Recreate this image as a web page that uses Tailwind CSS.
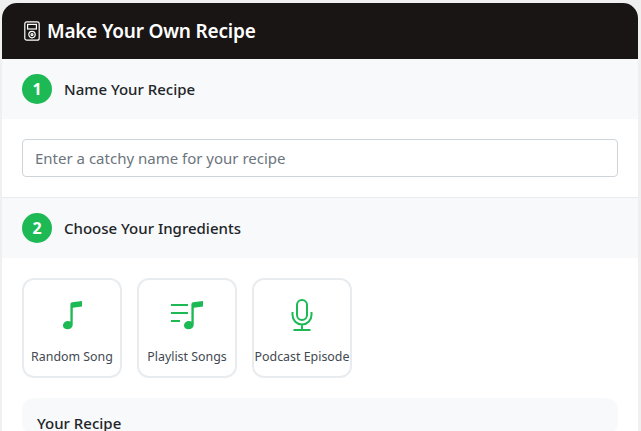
<!DOCTYPE html>
<html lang="en">
<head>
<meta charset="utf-8">
<script src="https://cdn.jsdelivr.net/npm/@tailwindcss/browser@4"></script>
</head>
<body class="h-[431px] overflow-hidden bg-[#f0f0f0] pt-[3px] pl-[2px] pr-[3px] font-['Noto_Sans','Open_Sans',sans-serif]">
<main class="overflow-hidden rounded-t-[15px] bg-white h-[428px]">
  <header class="flex h-[56px] items-center gap-[7px] bg-[#191514] pl-[22px] text-white">
    <svg class="h-[20px] w-[16px]" viewBox="0 0 16 20" fill="none" stroke="currentColor" stroke-width="1.2"><rect x="0.8" y="0.8" width="14.4" height="18.4" rx="2"/><rect x="3.6" y="3.4" width="8.8" height="4.6"/><circle cx="8" cy="13.6" r="3.2"/><circle cx="8" cy="13.6" r="1"/></svg>
    <h1 class="text-[19px] font-semibold leading-none tracking-[-0.2px]">Make Your Own Recipe</h1>
  </header>
  <section>
    <div class="flex h-[60px] items-center gap-[12px] bg-[#f8f9fa] px-[20px]">
      <span class="flex h-[30px] w-[30px] items-center justify-center rounded-full bg-[#1db954] text-[16px] font-bold text-white">1</span>
      <h2 class="text-[15px] font-medium text-[#212529]">Name Your Recipe</h2>
    </div>
    <div class="h-[79px] border-b border-[#e9ecef] px-[20px] pt-[20px]">
      <input class="block h-[38px] w-full rounded-[4px] border border-[#ced4da] px-[12px] text-[15px] text-[#212529] placeholder:text-[#6c757d]" placeholder="Enter a catchy name for your recipe">
    </div>
  </section>
  <section>
    <div class="flex h-[60px] items-center gap-[12px] bg-[#f8f9fa] px-[20px]">
      <span class="flex h-[30px] w-[30px] items-center justify-center rounded-full bg-[#1db954] text-[16px] font-bold text-white">2</span>
      <h2 class="text-[15px] font-medium text-[#212529]">Choose Your Ingredients</h2>
    </div>
    <div class="px-[20px] pt-[20px]">
      <div class="flex gap-[15px]">
        <button class="flex h-[100px] w-[100px] flex-col items-center rounded-[12px] border-2 border-[#e9ecef] bg-white pt-[20px]">
          <svg class="h-[32px] w-[32px]" viewBox="0 0 32 32" fill="#1db954"><path d="M14.4 4Q14.6 2.5 16.2 2.2L26 1V6.6L16.8 7.8L16.7 25C16.5 27.5 14.5 29.3 11.5 29.3C9 29.3 7 28 7 25.8C7 23 9.5 21 12 21C12.9 21 13.8 21.2 14.4 21.6Z"/></svg>
          <span class="mt-[16px] text-[12.4px] leading-[18px] whitespace-nowrap text-[#424950]">Random Song</span>
        </button>
        <button class="flex h-[100px] w-[100px] flex-col items-center rounded-[12px] border-2 border-[#e9ecef] bg-white pt-[20px]">
          <svg class="h-[32px] w-[36px]" viewBox="0 0 36 32" fill="#1db954"><rect x="2" y="4" width="17" height="2"/><rect x="2" y="12" width="17" height="2"/><rect x="2" y="20" width="9" height="2"/><path transform="translate(8 0)" d="M14.4 4Q14.6 2.5 16.2 2.2L26 1V6.6L16.8 7.8L16.7 25C16.5 27.5 14.5 29.3 11.5 29.3C9 29.3 7 28 7 25.8C7 23 9.5 21 12 21C12.9 21 13.8 21.2 14.4 21.6Z"/></svg>
          <span class="mt-[16px] text-[12.4px] leading-[18px] whitespace-nowrap text-[#424950]">Playlist Songs</span>
        </button>
        <button class="flex h-[100px] w-[100px] flex-col items-center rounded-[12px] border-2 border-[#e9ecef] bg-white pt-[20px]">
          <svg class="h-[32px] w-[32px] overflow-visible" viewBox="0 0 32 32" fill="none" stroke="#1db954" stroke-width="2"><rect x="11" y="0" width="10" height="20" rx="5"/><path d="M6.5 12v3a9.5 9.5 0 0 0 19 0v-3M16 24.5v5.5M7.5 30h17"/></svg>
          <span class="mt-[16px] text-[12.4px] leading-[18px] whitespace-nowrap text-[#424950]">Podcast Episode</span>
        </button>
      </div>
      <div class="mt-[20px] rounded-[12px] bg-[#f8f9fa] px-[15px] pt-[14px]">
        <h3 class="text-[15px] font-medium text-[#212529]">Your Recipe</h3>
      </div>
    </div>
  </section>
</main>
</body>
</html>
